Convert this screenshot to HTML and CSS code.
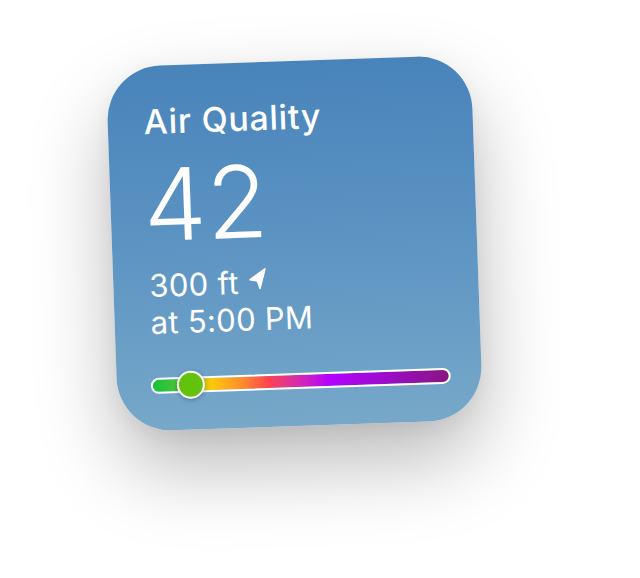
FILE: index.html
```html
<!DOCTYPE html>
<html lang="en">
<head>
<meta charset="utf-8">
<title>Air Quality</title>
<link rel="stylesheet" href="styles.css">
</head>
<body>
<main class="stage">
  <section class="widget">
    <h1 class="title">Air Quality</h1>
    <div class="value">42</div>
    <div class="meta">
      <div class="line">300 ft
        <svg class="arrow" viewBox="0 0 16 20" aria-hidden="true"><path d="M15.3 0.7 L0.6 10.6 L7.6 12 L9.9 19.4 Z" fill="#fff" stroke="#fff" stroke-width="1.4" stroke-linejoin="round"/></svg>
      </div>
      <div class="line">at 5:00 PM</div>
    </div>
    <div class="slider">
      <div class="track"></div>
      <div class="knob"></div>
    </div>
  </section>
</main>
</body>
</html>
```
FILE: styles.css
```css
html, body {
  margin: 0;
  padding: 0;
  background: #ffffff;
}
.stage {
  width: 640px;
  height: 578px;
  box-sizing: border-box;
  padding: 61px 0 0 112px;
  display: flex;
  align-items: flex-start;
  overflow: hidden;
}
.widget {
  width: 365px;
  height: 365px;
  box-sizing: border-box;
  padding: 36px 31px 0 36px;
  border-radius: 54px;
  background: linear-gradient(180deg, #4883ba 0%, #5a92c2 45%, #77a8c9 100%);
  box-shadow: 0 38px 80px rgba(0, 0, 0, 0.27), 0 6px 20px rgba(0, 0, 0, 0.05);
  transform: rotate(-2deg);
  display: flex;
  flex-direction: column;
  color: #fff;
  font-family: Inter, "Noto Sans", sans-serif;
}
.title {
  margin: 0;
  font-size: 34px;
  line-height: 39px;
  font-weight: 500;
  letter-spacing: 0.7px;
}
.value {
  margin-top: 12px;
  margin-left: -3px;
  font-size: 100px;
  line-height: 104px;
  font-weight: 300;
  letter-spacing: 0px;
}
.meta {
  margin-top: 10px;
  display: flex;
  flex-direction: column;
}
.line {
  font-size: 31px;
  line-height: 37px;
  font-weight: 400;
  letter-spacing: 0.3px;
  display: flex;
  align-items: center;
}
.arrow {
  width: 17px;
  height: 21px;
  margin-left: 11px;
  margin-top: -6px;
}
.slider {
  margin-top: 31px;
  margin-left: -2px;
  position: relative;
  height: 28px;
  display: flex;
  align-items: center;
}
.track {
  width: 300px;
  height: 16px;
  box-sizing: border-box;
  border: 2px solid #fff;
  border-radius: 8px;
  background: linear-gradient(90deg, #0fc43a 0%, #5bc23a 10%, #ffc80a 20%, #ff8e2a 30%, #ff4450 39%, #d62bb0 49%, #b300ff 60%, #9d0ccc 78%, #8a1480 100%);
}
.knob {
  position: absolute;
  left: 26px;
  top: 0;
  width: 28px;
  height: 28px;
  box-sizing: border-box;
  border-radius: 50%;
  background: #63c20b;
  border: 2px solid #fff;
  box-shadow: 0 1px 4px rgba(0, 0, 0, 0.3);
}
```
